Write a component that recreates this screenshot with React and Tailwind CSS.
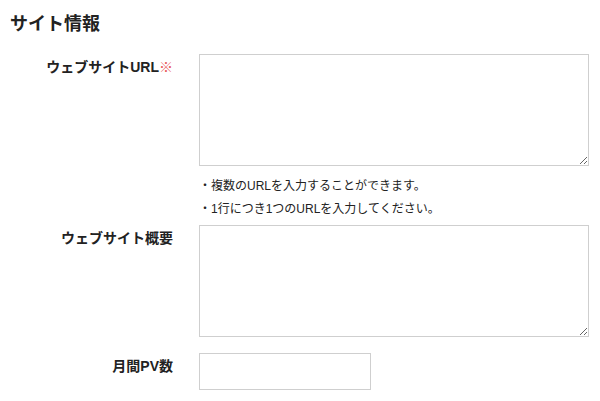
import React from 'react';

function FieldRow({ label, required, children, className = '' }) {
  return (
    <div className={`flex items-start ${className}`}>
      <div className="w-[173px] shrink-0 pt-[3px] text-right text-[14px] font-bold leading-5 text-[#222]">
        {label}
        {required && <span className="text-[#e85a5a]">※</span>}
      </div>
      <div className="ml-[26px]">{children}</div>
    </div>
  );
}

export default function App() {
  return (
    <div
      className="min-h-screen bg-white pl-[10px] pt-[12px] text-[#222]"
      style={{ fontFamily: '"Liberation Sans", "Noto Sans CJK JP", sans-serif' }}
    >
      {/* Section heading */}
      <h2 className="text-[18px] font-bold leading-6">サイト情報</h2>

      <div className="-ml-[10px] mt-[18px]">
        {/* Website URL */}
        <FieldRow label="ウェブサイトURL" required>
          <textarea className="block h-[112px] w-[390px] border border-[#cfcfcf] bg-white outline-none" />
          <ul className="mt-[9px] text-[12px] leading-[23px] text-[#222]">
            <li>・複数のURLを入力することができます。</li>
            <li>・1行につき1つのURLを入力してください。</li>
          </ul>
        </FieldRow>

        {/* Website summary */}
        <FieldRow label="ウェブサイト概要" className="mt-[4px]">
          <textarea className="block h-[112px] w-[390px] border border-[#cfcfcf] bg-white outline-none" />
        </FieldRow>

        {/* Monthly PV */}
        <FieldRow label="月間PV数" className="mt-[16px]">
          <input
            type="text"
            className="block h-[37px] w-[172px] border border-[#cfcfcf] bg-white outline-none"
          />
        </FieldRow>
      </div>
    </div>
  );
}
